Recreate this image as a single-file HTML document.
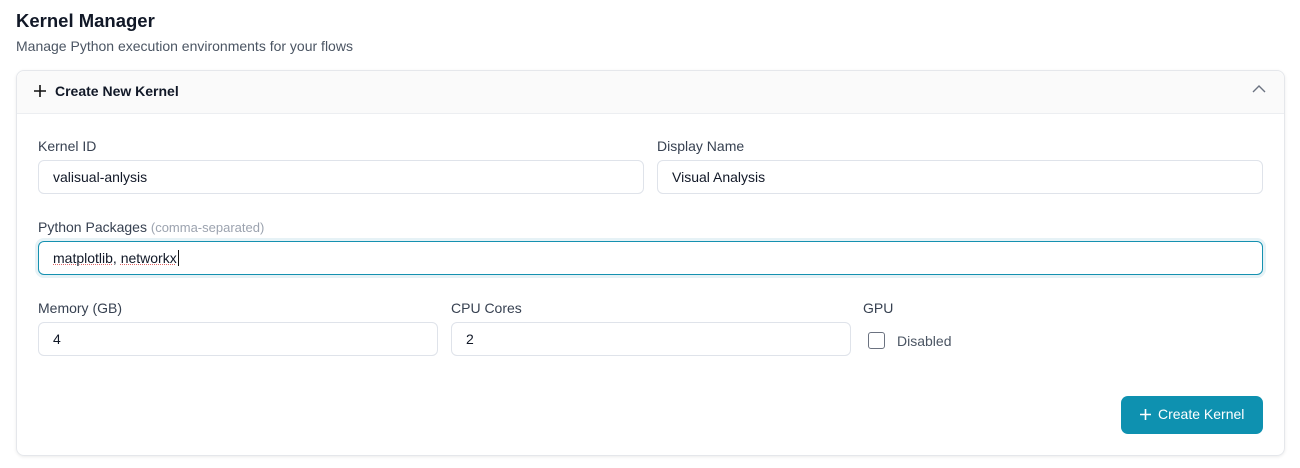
<!DOCTYPE html>
<html><head><style>
*{box-sizing:border-box;margin:0;padding:0}
body{width:1300px;height:468px;background:#fff;font-family:"Liberation Sans",sans-serif;color:#1f2937;position:relative;overflow:hidden}
.a{position:absolute}
h1{position:absolute;left:16px;top:10px;font-size:18.5px;font-weight:600;color:#111827}
.sub{left:16px;top:38px;font-size:14px;color:#4b5563}
.card{left:16px;top:70px;width:1269px;height:386px;border:1px solid #e5e7eb;border-radius:8px;box-shadow:0 1px 3px rgba(0,0,0,.08)}
.hdr{left:17px;top:71px;width:1267px;height:43px;background:#fafafa;border-bottom:1px solid #eceef1;border-radius:8px 8px 0 0}
.lbl{font-size:14px;color:#374151}
.inp{height:34px;border:1px solid #dfe3ea;border-radius:6px;font-size:14px;padding:8px 14px;color:#111827}
</style></head><body>
<h1>Kernel Manager</h1>
<div class="a sub">Manage Python execution environments for your flows</div>
<div class="a card"></div>
<div class="a hdr"></div>
<svg class="a" style="left:33px;top:84px" width="14" height="14"><path d="M7 1v12M1 7h12" stroke="#111" stroke-width="1.6"/></svg>
<div class="a" style="left:55px;top:83px;font-size:14px;font-weight:600;color:#111827">Create New Kernel</div>
<svg class="a" style="left:1252px;top:84px" width="14" height="10"><path d="M1 8l6-6 6 6" stroke="#6b7280" stroke-width="1.4" fill="none"/></svg>
<div class="a lbl" style="left:38px;top:138px">Kernel ID</div>
<div class="a inp" style="left:38px;top:160px;width:606px">valisual-anlysis</div>
<div class="a lbl" style="left:657px;top:138px">Display Name</div>
<div class="a inp" style="left:657px;top:160px;width:606px">Visual Analysis</div>
<div class="a lbl" style="left:38px;top:219px">Python Packages <span style="color:#9ca3af;font-size:13px">(comma-separated)</span></div>
<div class="a inp" style="left:38px;top:241px;width:1225px;border:1.5px solid #1591b0;box-shadow:0 0 0 3px #e6f2f6"><span style="text-decoration:underline dotted #e06666;text-decoration-thickness:1px">matplotlib</span>, <span style="text-decoration:underline dotted #e06666;text-decoration-thickness:1px">networkx</span><span style="border-left:1px solid #111;margin-left:1px"></span></div>
<div class="a lbl" style="left:38px;top:300px">Memory (GB)</div>
<div class="a inp" style="left:38px;top:322px;width:400px">4</div>
<div class="a lbl" style="left:451px;top:300px">CPU Cores</div>
<div class="a inp" style="left:451px;top:322px;width:400px">2</div>
<div class="a lbl" style="left:863px;top:300px">GPU</div>
<div class="a" style="left:868px;top:332px;width:17px;height:17px;border:1.5px solid #6b7280;border-radius:3px"></div>
<div class="a" style="left:897px;top:333px;font-size:14px;color:#4b5563">Disabled</div>
<div class="a" style="left:1121px;top:396px;width:142px;height:38px;background:#0e91b0;border-radius:7px;color:#fff;font-size:14px;padding:10px 0 0 37px">Create Kernel</div>
<svg class="a" style="left:1139px;top:408px" width="13" height="13"><path d="M6.5 1v11M1 6.5h11" stroke="#fff" stroke-width="1.6"/></svg>
</body></html>
